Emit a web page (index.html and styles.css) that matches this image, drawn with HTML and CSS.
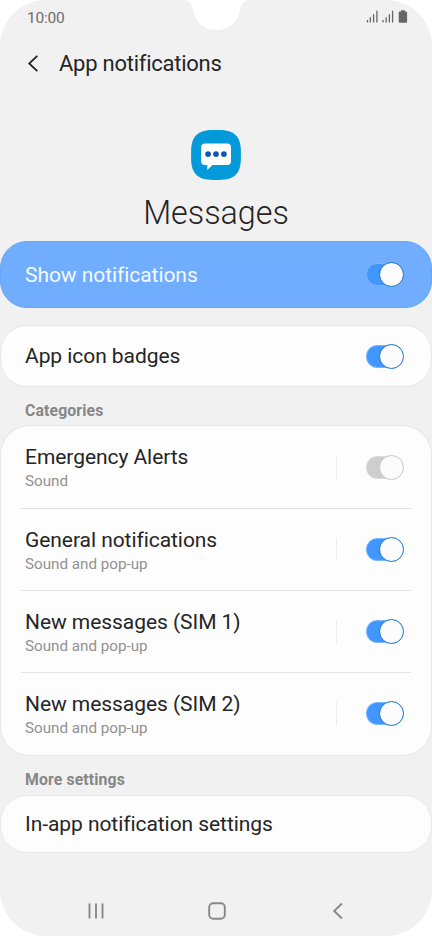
FILE: index.html
```html
<!DOCTYPE html>
<html lang="en">
<head>
<meta charset="utf-8">
<title>App notifications</title>
<link rel="stylesheet" href="styles.css">
</head>
<body>
<div class="phone">
  <svg class="notch" width="66" height="31" viewBox="0 0 66 31"><path d="M1 0C6 1 8 5 9 10C11 23 21 30 32.500 30S54 23 56 10C57 5 59 1 64 0Z"/></svg>
  <div class="status">
    <span class="time">10:00</span>
    <svg class="indicators" width="42" height="13" viewBox="0 0 42 13">
      <path class="bars" d="M1.400 10v2.500M4.300 7.300v5.200M7.600 4.200v8.300M10.900 .8v11.700M17 10v2.500M20.200 7.300v5.200M23.400 4.200v8.300M26.600 .8v11.700"/>
      <path d="M35 .2h4v1.400h1.100q1 0 1 1v9.100q0 1-1 1h-6.400q-1 0-1-1V2.600q0-1 1-1H35Z"/>
    </svg>
  </div>
  <header class="header">
    <svg class="back" width="12" height="18" viewBox="0 0 12 18"><path d="M10.300 .8 2.200 8.500l8.100 7.700"/></svg>
    <h1 class="heading">App notifications</h1>
  </header>
  <section class="app">
    <svg width="50" height="50" viewBox="0 0 50 50">
      <path fill="#0499d8" d="M22 .1H28C43.500 .1 49.900 6.500 49.900 22V28C49.900 43.500 43.500 49.900 28 49.900H22C6.500 49.900 .1 43.500 .1 28V22C.1 6.500 6.500 .1 22 .1Z"/>
      <path fill="#fff" d="M13.800 13.500H36.200Q40 13.500 40 17.300V31.200Q40 35 36.200 35H21.500L16.300 40V35H13.800Q10.200 35 10.200 31.200V17.300Q10.200 13.500 13.800 13.500Z"/>
      <g fill="#1256b4"><circle cx="17.100" cy="24.100" r="2.900"/><circle cx="25" cy="24.100" r="2.900"/><circle cx="32.900" cy="24.100" r="2.900"/></g>
    </svg>
    <h2 class="app-name">Messages</h2>
  </section>
  <div class="card card-main"><span class="label">Show notifications</span><span class="switch"></span></div>
  <div class="card card-badges"><span class="label">App icon badges</span><span class="switch"></span></div>
  <h3 class="section-title">Categories</h3>
  <div class="card card-list">
    <div class="row"><div class="text"><span class="label">Emergency Alerts</span><span class="sub">Sound</span></div><span class="divider"></span><span class="switch off"></span></div>
    <div class="row"><div class="text"><span class="label">General notifications</span><span class="sub">Sound and pop-up</span></div><span class="divider"></span><span class="switch"></span></div>
    <div class="row"><div class="text"><span class="label">New messages (SIM 1)</span><span class="sub">Sound and pop-up</span></div><span class="divider"></span><span class="switch"></span></div>
    <div class="row"><div class="text"><span class="label">New messages (SIM 2)</span><span class="sub">Sound and pop-up</span></div><span class="divider"></span><span class="switch"></span></div>
  </div>
  <h3 class="section-title section-more">More settings</h3>
  <div class="card card-more"><span class="label">In-app notification settings</span></div>
  <nav class="nav">
    <svg width="18" height="18" viewBox="0 0 18 18"><path d="M2.500 1.500v15M9 1.500v15M15.500 1.500v15"/></svg>
    <svg width="18" height="18" viewBox="0 0 18 18"><rect x="1.200" y="1.200" width="15.600" height="15.600" rx="4"/></svg>
    <svg width="18" height="18" viewBox="0 0 18 18"><path d="M13 1.500 5.200 9l7.800 7.500"/></svg>
  </nav>
</div>
</body>
</html>
```
FILE: styles.css
```css
* { box-sizing: border-box; }
body { margin: 0; background: #fff; font-family: Roboto, "Liberation Sans", sans-serif; color: #252525; }
h1, h2, h3 { margin: 0; font-weight: 400; }
.phone { position: relative; height: 936px; overflow: hidden; background: #f1f1f1; border-radius: 46px; display: flex; flex-direction: column; }
.notch { position: absolute; left: 184px; top: 0; fill: #fff; }
.status { height: 35px; flex: none; display: flex; justify-content: space-between; align-items: center; padding: 0 24px 0 27px; }
.time { font-size: 15.5px; color: #6c6c6c; letter-spacing: -.2px; }
.indicators { fill: #666; margin-top: -2px; }
.bars { stroke: #666; stroke-width: 1.3; fill: none; }
.header { height: 58px; flex: none; display: flex; align-items: center; padding-left: 27px; gap: 20px; }
.back { fill: none; stroke: #252525; stroke-width: 1.8; }
.heading { font-size: 22px; line-height: 26px; letter-spacing: -.25px; }
.app { height: 148px; flex: none; padding-top: 37px; display: flex; flex-direction: column; align-items: center; }
.app-name { font-size: 32.3px; line-height: 40px; font-weight: 300; margin-top: 13px; }
.card { flex: none; display: flex; align-items: center; justify-content: space-between; background: #fdfdfd; border: 1px solid #e7e7e7; border-radius: 27px; padding: 0 27px 0 24px; }
.card-main { height: 67px; background: #70adff; border-color: #65a5fa; color: #f3faff; }
.card-badges { height: 62px; margin-top: 17px; }
.label { font-size: 21px; line-height: 26px; letter-spacing: -.06px; white-space: nowrap; }
.switch { position: relative; z-index: 0; width: 38px; height: 25px; flex: none; display: flex; align-items: flex-start; justify-content: flex-end; }
.switch::before { content: ""; position: absolute; z-index: -1; left: 0; top: 1px; width: 34px; height: 21px; border-radius: 11px; background: #4296ff; border: 1px solid #7bb5fc; }
.switch::after { content: ""; width: 23px; height: 23px; border-radius: 50%; background: #fcfcfc; border: 1px solid #1670ca; }
.switch.off::before { background: #cecece; border-color: #dcdcdc; }
.switch.off::after { border-color: #c8c8c8; }
.section-title { height: 38px; flex: none; padding: 14px 25px 0; font-size: 15.8px; line-height: 20px; font-weight: 700; letter-spacing: .12px; color: #878787; }
.section-more { height: 39px; padding-top: 14px; }
.card-list { height: 330.5px; display: grid; grid-template-rows: repeat(4, 1fr); padding: 0 20px; justify-content: stretch; align-items: stretch; border-radius: 30px; }
.row { display: flex; align-items: center; padding: 0 7px 0 4px; }
.row + .row { border-top: 1px solid #e2e2e2; }
.text { display: flex; flex-direction: column; flex: 1; gap: 1px; padding-top: 2px; }
.sub { font-size: 15.2px; line-height: 21px; color: #919191; }
.divider { width: 1px; height: 23px; background: #ececec; margin-right: 29px; }
.card-more { height: 58px; padding-top: 1px; }
.nav { flex: 1; display: flex; justify-content: space-between; align-items: center; padding: 33px 85px 0 87px; }
.nav svg { fill: none; stroke: #888; stroke-width: 1.9; }
```
